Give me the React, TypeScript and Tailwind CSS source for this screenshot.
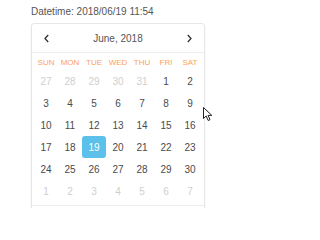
import React from "react";

const weekdays = ["SUN", "MON", "TUE", "WED", "THU", "FRI", "SAT"];

type Day = { n: number; muted?: boolean; sel?: boolean };

const days: Day[] = [
  ...[27, 28, 29, 30, 31].map((n) => ({ n, muted: true })),
  ...Array.from({ length: 30 }, (_, i) => ({ n: i + 1, sel: i + 1 === 19 })),
  ...[1, 2, 3, 4, 5, 6, 7].map((n) => ({ n, muted: true })),
];

export default function App() {
  return (
    <div
      className="relative w-[242px] h-[208px] overflow-hidden bg-white text-[#555]"
      style={{ fontFamily: '"Liberation Sans", Arial, sans-serif' }}
    >
      <div className="pl-[31px] pt-[6px] h-[23px] text-[10px] leading-[12px] text-[#555]">
        Datetime: 2018/06/19 11:54
      </div>
      <div className="ml-[31px] w-[174px] h-[200px] rounded-[3px] border border-[#e6e6e6] shadow-[0_1px_2px_rgba(0,0,0,0.05)]">
        <div className="h-[29px] flex items-center justify-between px-[12px] border-b border-[#ececec]">
          <svg width="5" height="9" viewBox="0 0 5 9">
            <path d="M4.2 1 L1 4.5 L4.2 8" fill="none" stroke="#333" strokeWidth="1.3" />
          </svg>
          <span className="text-[10px] text-[#555]">June, 2018</span>
          <svg width="5" height="9" viewBox="0 0 5 9">
            <path d="M0.8 1 L4 4.5 L0.8 8" fill="none" stroke="#333" strokeWidth="1.3" />
          </svg>
        </div>
        <div className="px-[2px]">
          <div className="grid grid-cols-[repeat(7,24px)] pt-[5px] h-[17px]">
            {weekdays.map((w) => (
              <div key={w} className="text-center text-[8px] leading-[10px] text-[#fb9f60]">
                {w}
              </div>
            ))}
          </div>
          <div className="grid grid-cols-[repeat(7,24px)] auto-rows-[22px]">
            {days.map((d, i) => (
              <div
                key={i}
                className={
                  d.sel
                    ? "flex items-center justify-center rounded-[3px] bg-[#5bc0ea] text-white text-[10px]"
                    : d.muted
                    ? "flex items-center justify-center text-[10px] text-[#cfcfcf]"
                    : "flex items-center justify-center text-[10px] text-[#4a4a4a]"
                }
              >
                {d.n}
              </div>
            ))}
          </div>
        </div>
        <div className="mt-[3px] border-t border-[#ececec]" />
      </div>
      <svg
        className="absolute left-[203px] top-[107px]"
        width="11"
        height="15"
        viewBox="0 0 11 15"
      >
        <path
          d="M0.5 0.5 L0.5 11.5 L3.2 9 L5.2 13.5 L7 12.7 L5.1 8.4 L8.8 8.4 Z"
          fill="#fff"
          stroke="#222"
          strokeWidth="1"
          strokeLinejoin="round"
        />
      </svg>
    </div>
  );
}
